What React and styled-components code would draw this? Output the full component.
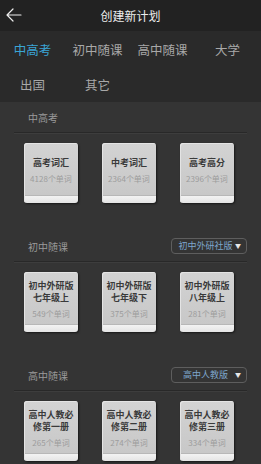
import React from 'react';
import styled, { createGlobalStyle } from 'styled-components';

const sections = [
  {
    title: '中高考',
    books: [
      { name: ['高考词汇'], count: 4128 },
      { name: ['中考词汇'], count: 2364 },
      { name: ['高考高分'], count: 2396 },
    ],
  },
  {
    title: '初中随课',
    edition: '初中外研社版',
    books: [
      { name: ['初中外研版', '七年级上'], count: 549 },
      { name: ['初中外研版', '七年级下'], count: 375 },
      { name: ['初中外研版', '八年级上'], count: 281 },
    ],
  },
  {
    title: '高中随课',
    edition: '高中人教版',
    books: [
      { name: ['高中人教必', '修第一册'], count: 265 },
      { name: ['高中人教必', '修第二册'], count: 274 },
      { name: ['高中人教必', '修第三册'], count: 334 },
    ],
  },
];

const tabs = ['中高考', '初中随课', '高中随课', '大学', '出国', '其它'];

export default function App() {
  return (
    <Page>
      <GlobalStyle />
      <Header>
        <BackButton>
          <svg width="16" height="14" viewBox="0 0 16 14" fill="none" stroke="#eee" strokeWidth="1.2" strokeLinecap="round" strokeLinejoin="round">
            <path d="M15 7H1.5M7 1L1 7l6 6" />
          </svg>
        </BackButton>
        <Title>创建新计划</Title>
      </Header>
      <Tabs>
        {tabs.map((t, i) => (
          <Tab key={t} active={i === 0}>{t}</Tab>
        ))}
      </Tabs>
      <Content>
        {sections.map((s) => (
          <Section key={s.title}>
            <SectionHead>
              <SectionTitle>{s.title}</SectionTitle>
              {s.edition && (
                <Edition>
                  <EditionText>{s.edition}</EditionText>
                  <Caret>▼</Caret>
                </Edition>
              )}
            </SectionHead>
            <Books>
              {s.books.map((b) => (
                <Book key={b.name.join('')}>
                  <BookName>
                    {b.name.map((line) => (
                      <div key={line}>{line}</div>
                    ))}
                  </BookName>
                  <BookCount>{b.count}个单词</BookCount>
                </Book>
              ))}
            </Books>
          </Section>
        ))}
      </Content>
    </Page>
  );
}

const GlobalStyle = createGlobalStyle`
  html, body {
    margin: 0;
    padding: 0;
    background: #343434;
  }
  body {
    font-family: "Noto Sans CJK SC", "Noto Sans", sans-serif;
  }
`;

const Page = styled.div`
  width: 261px;
  height: 464px;
  overflow: hidden;
  background: #343434;
`;

const Header = styled.div`
  position: relative;
  height: 31px;
  background: #222222;
  display: flex;
  align-items: center;
  justify-content: center;
`;

const BackButton = styled.div`
  position: absolute;
  left: 6px;
  top: 8px;
  display: flex;
`;

const Title = styled.div`
  color: #eeeeee;
  font-size: 12px;
  line-height: 14px;
`;

const Tabs = styled.div`
  display: grid;
  grid-template-columns: repeat(4, 65px);
  grid-auto-rows: 35px;
  padding-top: 1px;
  height: 71px;
  background: #2a2a2a;
  box-sizing: border-box;
`;

const Tab = styled.div`
  display: flex;
  align-items: center;
  justify-content: center;
  font-size: 12.5px;
  color: ${(p) => (p.active ? '#3aa5d6' : '#a8a8a8')};
`;

const Content = styled.div`
  padding: 0 14px;
`;

const Section = styled.div`
  padding-bottom: 28px;
`;

const SectionHead = styled.div`
  height: 30px;
  display: flex;
  align-items: center;
  justify-content: space-between;
  padding: 0 0 0 14px;
  border-bottom: 1px solid #282828;
  box-shadow: 0 1px 0 #3d3d3d;
`;

const SectionTitle = styled.div`
  color: #9a9a9a;
  font-size: 10px;
`;

const Edition = styled.div`
  width: 76px;
  height: 16px;
  box-sizing: border-box;
  border: 1px solid #5e5e5e;
  border-radius: 4px;
  display: flex;
  align-items: center;
  padding: 0 5px 0 4px;
`;

const EditionText = styled.div`
  flex: 1;
  text-align: center;
  color: #7ea6cc;
  font-size: 9px;
  line-height: 12px;
`;

const Caret = styled.div`
  color: #e8e8e8;
  font-size: 6px;
  line-height: 8px;
`;

const Books = styled.div`
  display: flex;
  justify-content: space-between;
  padding: 10px 13px 0 10px;
`;

const Book = styled.div`
  width: 54px;
  height: 60px;
  box-sizing: border-box;
  border-radius: 3px;
  background: linear-gradient(#d3d3d3, #c8c8c8 86%, #a4a4a4 87%, #f2f2f2 89%, #e4e4e4);
  box-shadow: 1px 1px 2px rgba(0, 0, 0, 0.55), inset 1px 1px 0 #e4e4e4;
  display: flex;
  flex-direction: column;
  align-items: center;
  justify-content: center;
  padding-bottom: 6px;
`;

const BookName = styled.div`
  color: #3a3a3a;
  font-size: 9px;
  font-weight: bold;
  line-height: 12px;
  text-align: center;
`;

const BookCount = styled.div`
  color: #9c9c9c;
  font-size: 8px;
  line-height: 10px;
  margin-top: 5px;
  white-space: nowrap;
`;
